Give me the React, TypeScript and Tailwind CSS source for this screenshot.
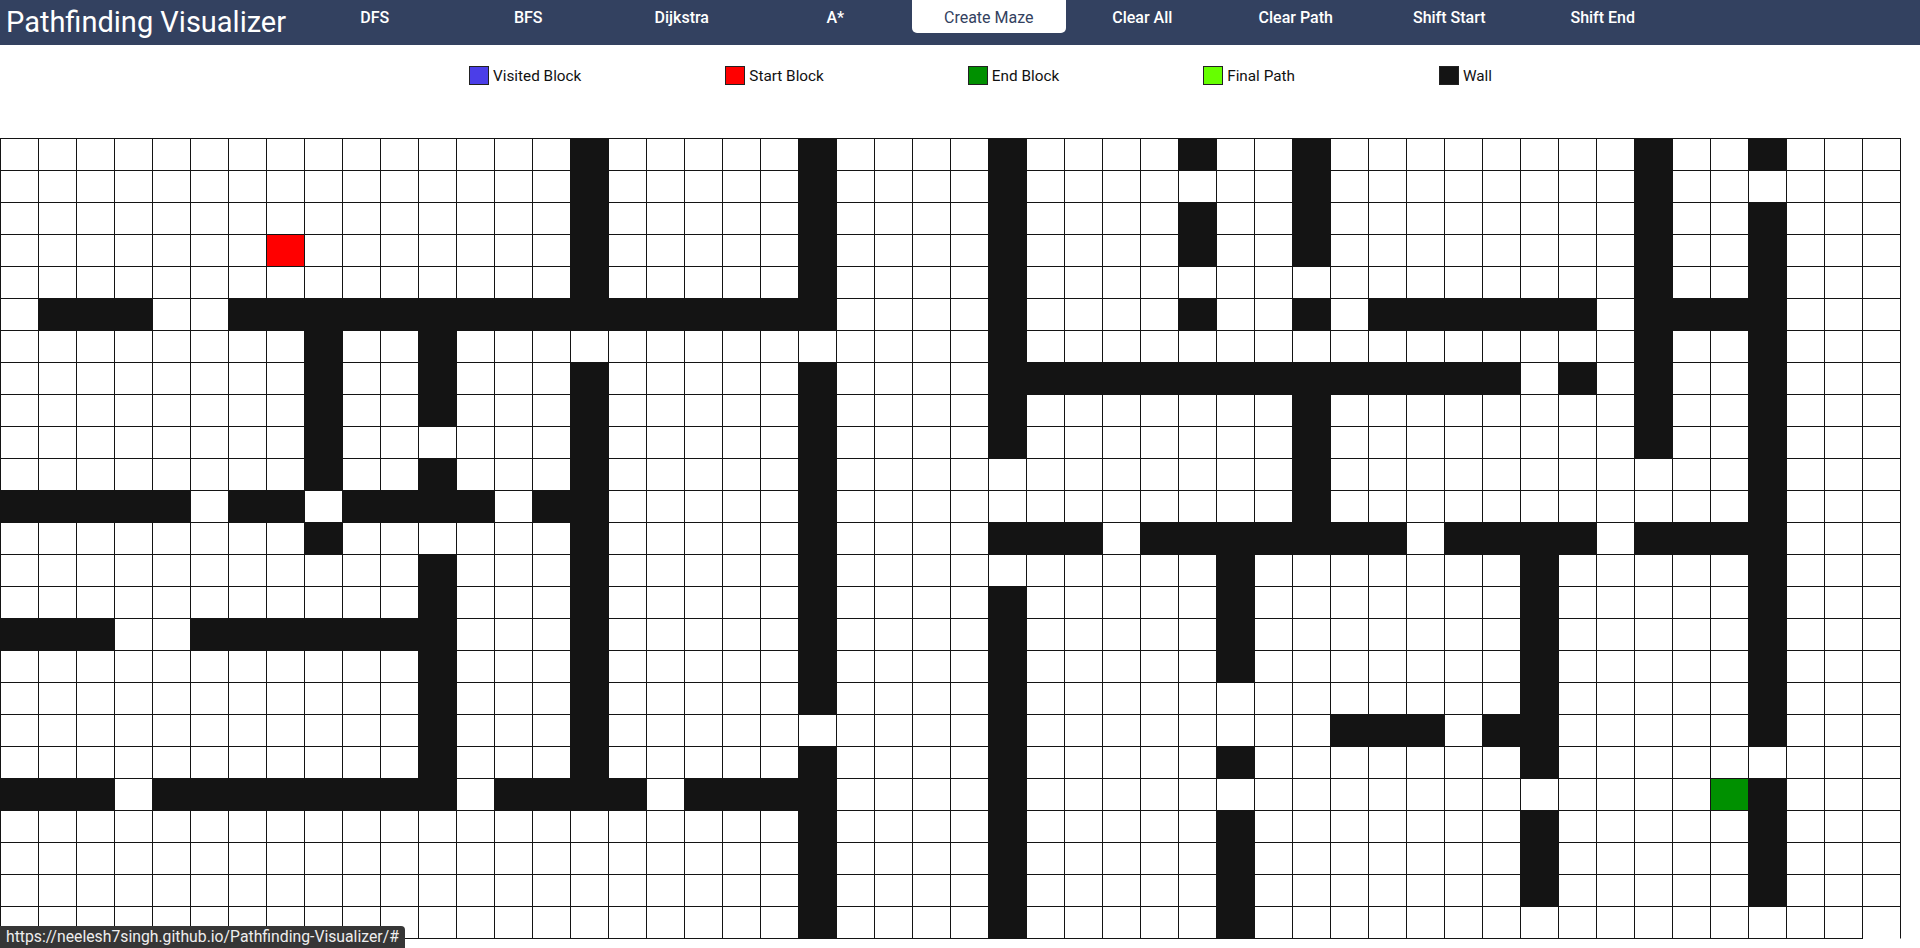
import React from 'react';

const ROWS = 25;
const COLS = 50;
const START = [3, 7];
const END = [20, 45];

// walls per row: single column or [from, to] inclusive
const WALLS: (number | [number, number])[][] = [
  [15, 21, 26, 31, 34, 43, 46],
  [15, 21, 26, 34, 43],
  [15, 21, 26, 31, 34, 43, 46],
  [15, 21, 26, 31, 34, 43, 46],
  [15, 21, 26, 43, 46],
  [[1, 3], [6, 21], 26, 31, 34, [36, 41], [43, 46]],
  [8, 11, 26, 43, 46],
  [8, 11, 15, 21, [26, 39], 41, 43, 46],
  [8, 11, 15, 21, 26, 34, 43, 46],
  [8, 15, 21, 26, 34, 43, 46],
  [8, 11, 15, 21, 34, 46],
  [[0, 4], [6, 7], [9, 12], [14, 15], 21, 34, 46],
  [8, 15, 21, [26, 28], [30, 36], [38, 41], [43, 46]],
  [11, 15, 21, 32, 40, 46],
  [11, 15, 21, 26, 32, 40, 46],
  [[0, 2], [5, 11], 15, 21, 26, 32, 40, 46],
  [11, 15, 21, 26, 32, 40, 46],
  [11, 15, 21, 26, 40, 46],
  [11, 15, 26, [35, 37], [39, 40], 46],
  [11, 15, 21, 26, 32, 40],
  [[0, 2], [4, 11], [13, 16], [18, 21], 26, 46],
  [21, 26, 32, 40, 46],
  [21, 26, 32, 40, 46],
  [21, 26, 32, 40, 46],
  [21, 26, 32],
];

const wallSet = new Set<string>();
WALLS.forEach((row, r) =>
  row.forEach((w) => {
    const [a, b] = typeof w === 'number' ? [w, w] : w;
    for (let c = a; c <= b; c++) wallSet.add(`${r}-${c}`);
  })
);

const navItems = ['DFS', 'BFS', 'Dijkstra', 'A*', 'Create Maze', 'Clear All', 'Clear Path', 'Shift Start', 'Shift End'];

const legend = [
  { label: 'Visited Block', color: 'bg-[#4b3ee8]' },
  { label: 'Start Block', color: 'bg-[#ff0000]' },
  { label: 'End Block', color: 'bg-[#009000]' },
  { label: 'Final Path', color: 'bg-[#66ff00]' },
  { label: 'Wall', color: 'bg-[#141414]' },
];

function Cell({ r, c }: { r: number; c: number }) {
  const isStart = r === START[0] && c === START[1];
  const isEnd = r === END[0] && c === END[1];
  const isWall = wallSet.has(`${r}-${c}`);
  const last = r === ROWS - 1 && c === COLS - 1;

  let cls = 'bg-white';
  if (isWall) cls = 'bg-[#141414]';
  else if (isStart) cls = 'bg-[#ff0000]';
  else if (isEnd) cls = 'bg-[#009000]';

  return (
    <div
      className={`h-[32px] w-[38px] border-r border-b border-r-[#141414] ${last ? 'border-b-white' : 'border-b-[#141414]'} ${cls}`}
    />
  );
}

export default function App() {
  return (
    <div className="relative h-[948px] w-[1920px] overflow-hidden bg-white font-['Roboto','Liberation_Sans',sans-serif]">
      {/* Navbar */}
      <header className="flex h-[45px] items-start bg-[#334160]">
        <div className="w-[298px] pl-[6px] text-[29px] leading-[45px] text-white">Pathfinding Visualizer</div>
        <nav className="flex">
          {navItems.map((item) =>
            item === 'Create Maze' ? (
              <div
                key={item}
                className="flex h-[33px] w-[153.5px] items-center justify-center rounded-b-[5px] bg-white pt-[3px] text-[16px] text-[#334160]"
              >
                {item}
              </div>
            ) : (
              <div
                key={item}
                className="flex h-[33px] w-[153.5px] items-center justify-center pt-[3px] text-[16px] font-medium text-white"
              >
                {item}
              </div>
            )
          )}
        </nav>
      </header>

      {/* Legend */}
      <div className="flex h-[93px] items-start gap-[144px] pt-[19px] pl-[469px]">
        {legend.map((l) => (
          <div key={l.label} className="flex items-center">
            <span className={`h-[19px] w-[20px] border border-[#222] ${l.color}`} />
            <span className="ml-[4px] pt-[3px] text-[15.3px] leading-[19px] text-[#111]">{l.label}</span>
          </div>
        ))}
      </div>

      {/* Grid */}
      <div className="grid w-fit grid-cols-[repeat(50,38px)] border-t border-l border-[#141414]">
        {Array.from({ length: ROWS }).map((_, r) =>
          Array.from({ length: COLS }).map((_, c) => <Cell key={`${r}-${c}`} r={r} c={c} />)
        )}
      </div>

      {/* Browser status link */}
      <div className="absolute bottom-0 left-0 h-[22px] rounded-tr-[4px] bg-[#363636] px-[6px] text-[15.75px] leading-[22px] text-[#eeeeee]">
        https://neelesh7singh.github.io/Pathfinding-Visualizer/#
      </div>
    </div>
  );
}
